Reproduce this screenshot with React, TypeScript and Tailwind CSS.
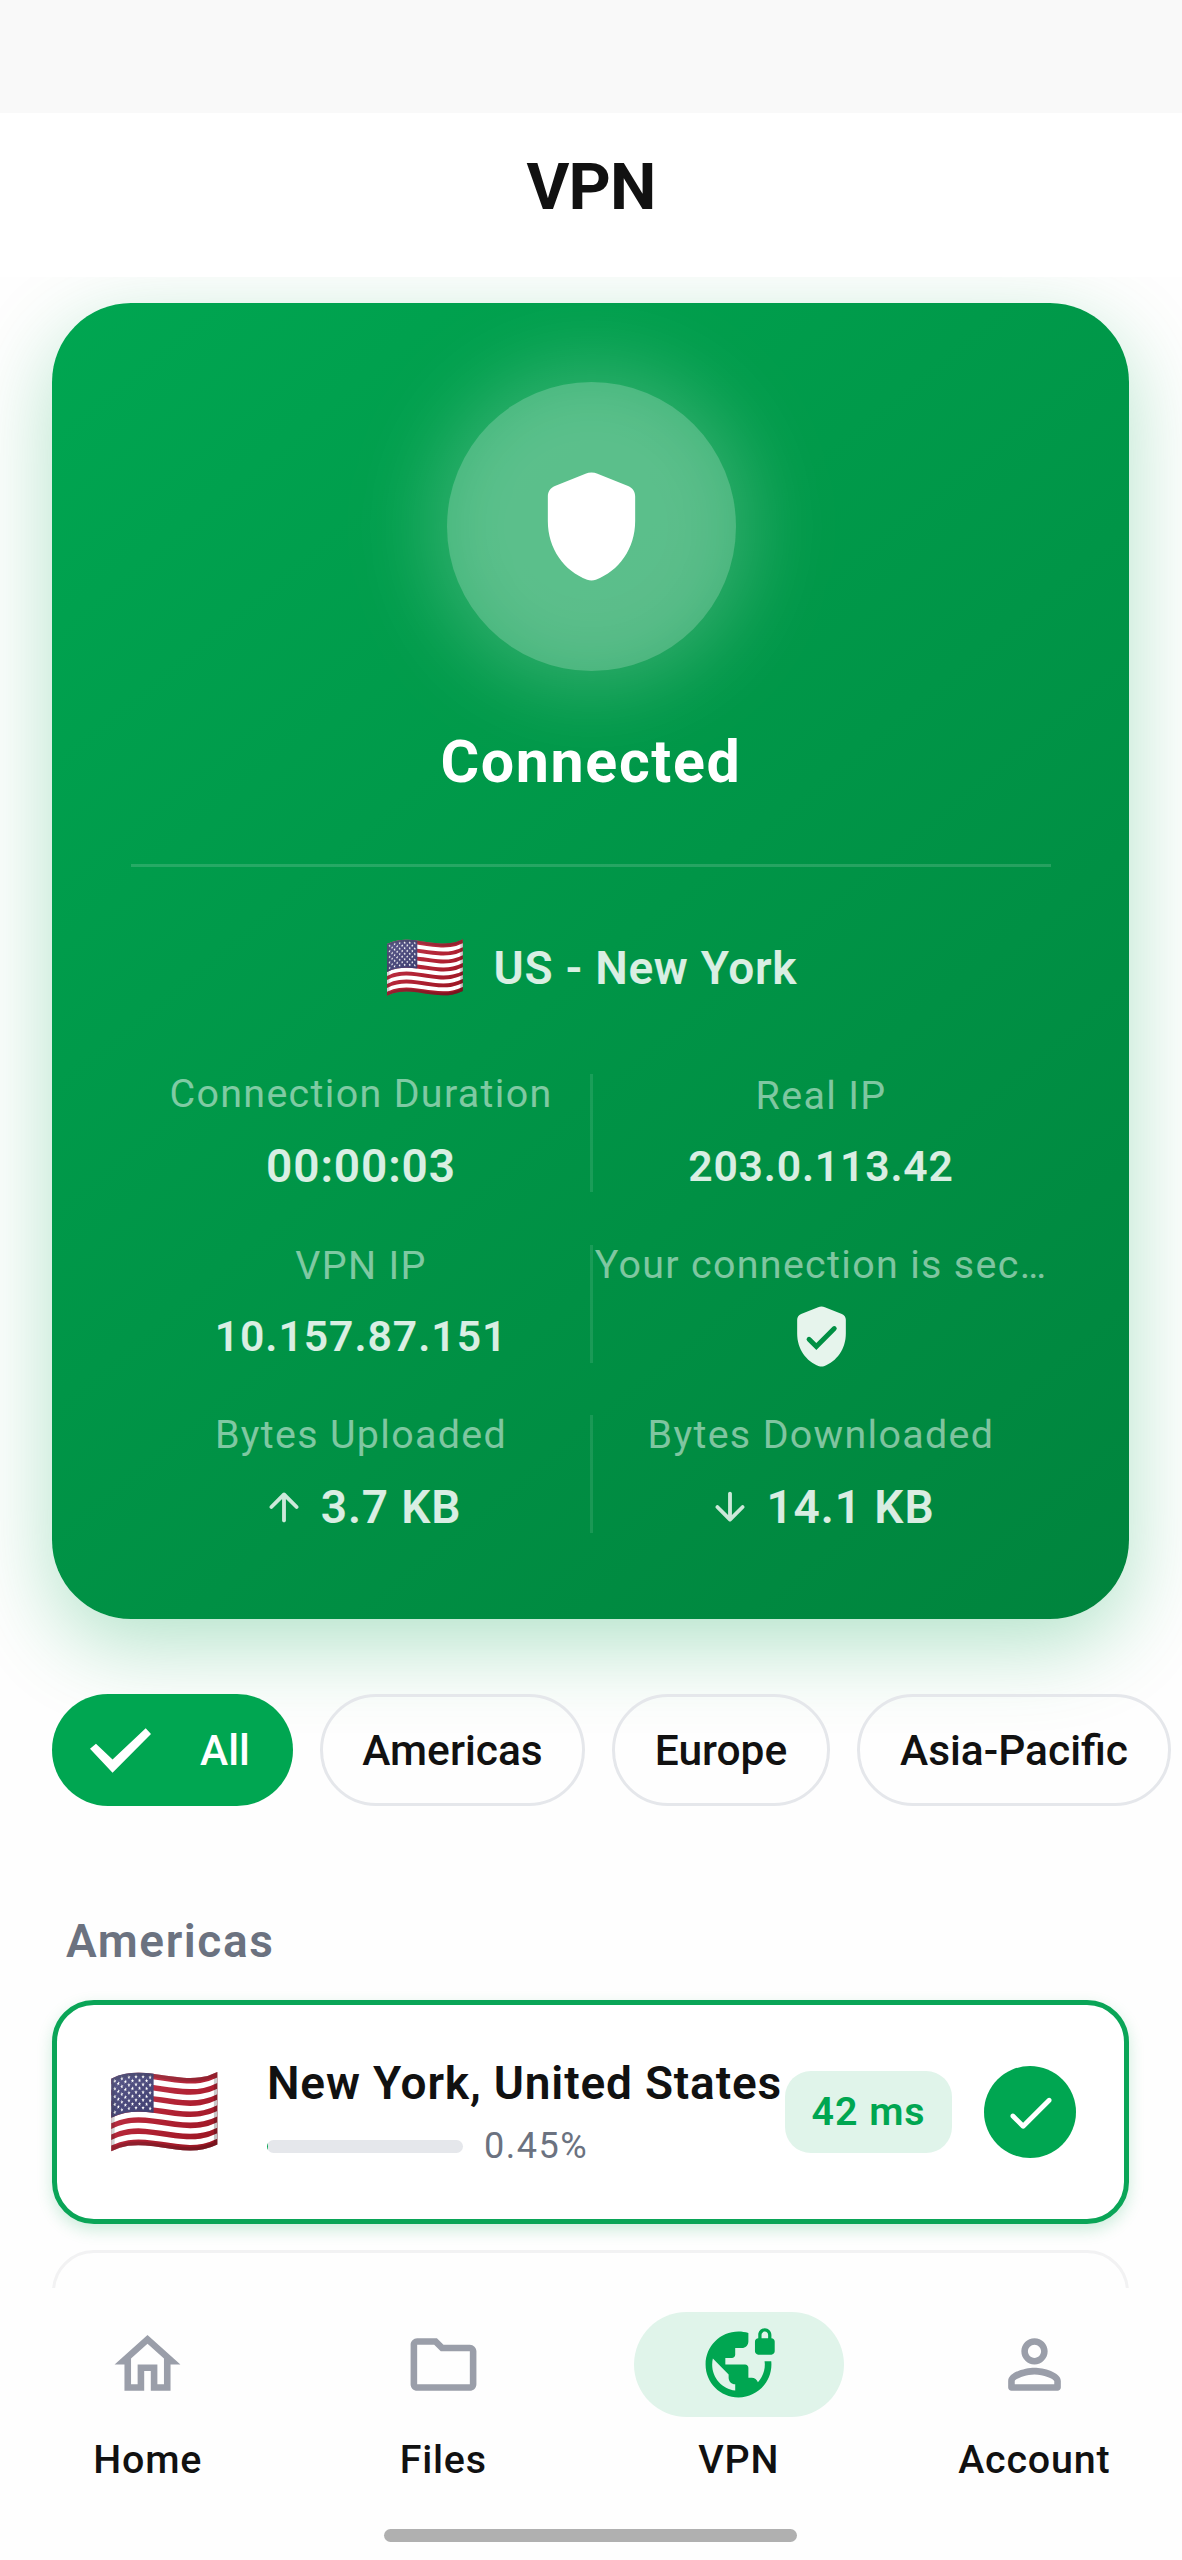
import React from "react";

type IconProps = { d: string; size: string; className?: string };

function Icon({ d, size, className = "" }: IconProps) {
  return (
    <svg viewBox="0 0 24 24" fill="currentColor" className={`shrink-0 ${size} ${className}`}>
      <path d={d} />
    </svg>
  );
}

const SHIELD =
  "M10.9 2.35 5.3 4.6C4.5 4.9 4 5.65 4 6.5V11c0 5.1 3 9.2 7.2 10.75.5.2 1.1.2 1.6 0C17 20.2 20 16.1 20 11V6.5c0-.85-.5-1.6-1.3-1.9L13.1 2.35c-.7-.3-1.5-.3-2.2 0z";
const ARROW_UP =
  "M13 19V7.83l4.88 4.88c.39.39 1.03.39 1.42 0 .39-.39.39-1.02 0-1.41l-6.59-6.59c-.39-.39-1.02-.39-1.41 0l-6.6 6.58c-.39.39-.39 1.02 0 1.41.39.39 1.02.39 1.41 0L11 7.83V19c0 .55.45 1 1 1s1-.45 1-1z";
const ARROW_DOWN =
  "M11 5v11.17l-4.88-4.88c-.39-.39-1.03-.39-1.42 0-.39.39-.39 1.02 0 1.41l6.59 6.59c.39.39 1.02.39 1.41 0l6.59-6.59c.39-.39.39-1.02 0-1.41-.39-.39-1.02-.39-1.41 0L13 16.17V5c0-.55-.45-1-1-1s-1 .45-1 1z";
const CHECK_ROUND =
  "M9 16.17 5.53 12.7c-.39-.39-1.02-.39-1.41 0-.39.39-.39 1.02 0 1.41l4.18 4.18c.39.39 1.02.39 1.41 0L20.29 7.71c.39-.39.39-1.02 0-1.41-.39-.39-1.02-.39-1.41 0L9 16.17z";
const HOME = "M12 5.69l5 4.5V18h-2v-6H9v6H7v-7.81l5-4.5M12 3L2 12h3v8h6v-6h2v6h6v-8h3L12 3z";
const FOLDER =
  "M9.17 6l2 2H20v10H4V6h5.17M10 4H4c-1.1 0-1.99.9-1.99 2L2 18c0 1.1.9 2 2 2h16c1.1 0 2-.9 2-2V8c0-1.1-.9-2-2-2h-8l-2-2z";
const PERSON =
  "M12 6c1.1 0 2 .9 2 2s-.9 2-2 2-2-.9-2-2 .9-2 2-2m0 9c2.7 0 5.8 1.29 6 2v1H6v-.99c.2-.72 3.3-2.01 6-2.01m0-11C9.79 4 8 5.79 8 8s1.79 4 4 4 4-1.79 4-4-1.79-4-4-4zm0 9c-2.67 0-8 1.34-8 4v2c0 .55.45 1 1 1h14c.55 0 1-.45 1-1v-2c0-2.66-5.33-4-8-4z";

function SecureShield() {
  return (
    <svg viewBox="0 0 24 24" className="size-[73px] shrink-0" fill="none">
      <path d={SHIELD} fill="#e6f4ec" />
      <path d="M7.9 12.9l2.4 2.4 5.9-5.9" stroke="#008f43" strokeWidth="1.6" strokeLinecap="round" />
    </svg>
  );
}

function GlobeLock() {
  return (
    <svg viewBox="0 0 24 24" fill="currentColor" className="size-[79px] text-[#00a651]">
      <path
        transform="translate(1 -1)"
        d="M21 5V4c0-1.1-.9-2-2-2s-2 .9-2 2v1c-.55 0-1 .45-1 1v3c0 .55.45 1 1 1h4c.55 0 1-.45 1-1V6c0-.55-.45-1-1-1zm-1 0h-2V4c0-.55.45-1 1-1s1 .45 1 1v1zM18.92 12c.04.33.08.66.08 1 0 2.08-.8 3.97-2.1 5.39-.26-.81-1-1.39-1.9-1.39h-1v-3c0-.55-.45-1-1-1H7v-2h2c.55 0 1-.45 1-1V8h2c1.1 0 2-.9 2-2V3.46c-.95-.3-1.95-.46-3-.46C5.48 3 1 7.48 1 13s4.48 10 10 10 10-4.48 10-10c0-.34-.02-.67-.05-1h-2.03zM10 20.93c-3.95-.49-7-3.85-7-7.93 0-.62.08-1.21.21-1.79L8 16v1c0 1.1.9 2 2 2v1.93z"
      />
    </svg>
  );
}

function Stat({ label, labelClass = "", children }: { label: string; labelClass?: string; children: React.ReactNode }) {
  return (
    <div className="flex min-w-0 flex-1 flex-col items-center">
      <div className={`flex h-10 items-center whitespace-nowrap text-[39.4px] leading-none tracking-[1.33px] text-white/50 ${labelClass}`}>
        {label}
      </div>
      <div className="mt-[26px] flex h-[52px] items-center justify-center whitespace-nowrap font-semibold leading-none text-white/85">
        {children}
      </div>
    </div>
  );
}

function StatRow({ children }: { children: [React.ReactNode, React.ReactNode] }) {
  return (
    <div className="flex h-[118px]">
      {children[0]}
      <div className="-mx-[1.5px] w-[3px] bg-white/10" />
      {children[1]}
    </div>
  );
}

function ConnectionCard() {
  return (
    <section className="ml-[52px] mt-[26px] flex h-[1315.5px] w-[1077px] flex-col items-center rounded-[79px] bg-[linear-gradient(140.7deg,#00a651,#00843d)] pl-[79px] pr-[78px] pt-[79px] shadow-[0_26px_84px_rgba(0,166,81,0.3)]">
      <div className="relative flex size-[289px] items-center justify-center">
        <div className="absolute -inset-[18px] rounded-full bg-white/20 blur-[40px]" />
        <div className="absolute inset-0 rounded-full bg-white/20" />
        <Icon d={SHIELD} size="size-[131px]" className="relative text-white" />
      </div>
      <h2 className="mt-[56px] flex h-[70px] items-center text-[59.1px] font-bold leading-none tracking-[1.64px] text-white">
        Connected
      </h2>
      <div className="mt-[67px] h-[3px] w-full bg-white/15" />
      <div className="mt-[61px] flex h-20 items-center gap-[27px]">
        <span className="font-['Noto_Color_Emoji'] text-[65.7px] leading-none">🇺🇸</span>
        <span className="text-[46px] font-semibold leading-none tracking-[0.72px] text-white/85">US - New York</span>
      </div>
      <div className="mt-[66px] flex w-full flex-col gap-[52.5px]">
        <StatRow>
          <Stat label="Connection Duration">
            <span className="text-[46px] tracking-[0.89px]">00:00:03</span>
          </Stat>
          <Stat label="Real IP" labelClass="pt-[3px]">
            <span className="text-[42.7px] tracking-[0.8px]">203.0.113.42</span>
          </Stat>
        </StatRow>
        <StatRow>
          <Stat label="VPN IP" labelClass="pt-[3px]">
            <span className="text-[42.7px] tracking-[0.95px]">10.157.87.151</span>
          </Stat>
          <Stat label="Your connection is sec…">
            <SecureShield />
          </Stat>
        </StatRow>
        <StatRow>
          <Stat label="Bytes Uploaded">
            <Icon d={ARROW_UP} size="size-[46px]" className="mr-[14px] text-white/80" />
            <span className="text-[46px] tracking-[0.84px]">3.7 KB</span>
          </Stat>
          <Stat label="Bytes Downloaded">
            <Icon d={ARROW_DOWN} size="size-[46px]" className="mr-[13px] text-white/80" />
            <span className="text-[46px] tracking-[0.92px]">14.1 KB</span>
          </Stat>
        </StatRow>
      </div>
    </section>
  );
}

function Chip({ label, width }: { label: string; width: string }) {
  return (
    <button
      className={`flex h-[112px] shrink-0 items-center justify-center rounded-full border-[3px] border-[#e5e7eb] pt-[2px] text-[42.5px] font-medium leading-none text-[#111] ${width}`}
    >
      {label}
    </button>
  );
}

function ServerCard() {
  return (
    <div className="ml-[52px] mt-[32px] flex h-[224px] w-[1077px] items-center rounded-[42px] border-[5px] border-[#0aa557] bg-white shadow-[0_6px_16px_rgba(0,166,81,0.2)]">
      <span className="ml-[50px] w-[113px] font-['Noto_Color_Emoji'] text-[92px] leading-none">🇺🇸</span>
      <div className="ml-[47px] flex w-[518px] flex-col">
        <span className="whitespace-nowrap text-[46px] font-semibold leading-[54px] tracking-[0.82px] text-[#111]">
          New York, United States
        </span>
        <div className="mt-[14px] flex h-[44px] items-center">
          <div className="h-[13px] w-[196px] overflow-hidden rounded-full bg-[#e5e7eb]">
            <div className="h-full w-[1px] bg-[#00a651]" />
          </div>
          <span className="ml-[21px] text-[36.1px] leading-none tracking-[1.5px] text-[#6b7280]">0.45%</span>
        </div>
      </div>
      <div className="flex h-[82px] w-[167px] items-center justify-center rounded-[26px] bg-[#e0f4ea] text-[39.4px] font-semibold leading-none tracking-[0.95px] text-[#00a651]">
        42 ms
      </div>
      <div className="ml-[32px] flex size-[92px] items-center justify-center rounded-full bg-[#00a651] text-white">
        <Icon d={CHECK_ROUND} size="size-[59px]" />
      </div>
    </div>
  );
}

function NavItem({ label, active, children }: { label: string; active?: boolean; children: React.ReactNode }) {
  return (
    <div className="flex flex-1 flex-col items-center">
      <div className={`flex h-[105px] w-[210px] items-center justify-center rounded-full text-[#9a9ea9] ${active ? "bg-[#e0f4ea]" : ""}`}>
        {children}
      </div>
      <span className="mt-[20px] text-[39.4px] font-medium leading-[46px] tracking-[0.8px] text-[#111]">{label}</span>
    </div>
  );
}

export default function App() {
  return (
    <div className="flex h-[2560px] w-[1182px] flex-col overflow-hidden bg-[#fefefe] font-[Roboto,sans-serif]">
      <div className="h-[113px] shrink-0 bg-[#f9f9f9]" />
      <header className="flex h-[164px] shrink-0 items-center justify-center bg-white pb-[17px] text-[65.7px] font-bold leading-none tracking-[-0.82px] text-[#111]">
        VPN
      </header>
      <main className="h-[2010.5px] min-h-0 shrink-0 overflow-hidden">
        <ConnectionCard />
        <div className="ml-[52px] mt-[75.5px] flex gap-[27px]">
          <button className="flex h-[112px] w-[241px] shrink-0 items-center rounded-full bg-[#00a651] pl-[38px] text-[42.5px] font-medium leading-none text-white">
            <svg viewBox="122 128 184 134" fill="currentColor" className="h-[45px] w-[61px]">
              <path d="M122 190l18-15 50 47 100-94 16 17-116 117z" />
            </svg>
            <span className="ml-[49px] pt-[2px]">All</span>
          </button>
          <Chip label="Americas" width="w-[265px]" />
          <Chip label="Europe" width="w-[218px]" />
          <Chip label="Asia-Pacific" width="w-[314px]" />
        </div>
        <h3 className="ml-[66px] mt-[108px] text-[46px] font-semibold leading-[54px] tracking-[1.6px] text-[#6b7280]">
          Americas
        </h3>
        <ServerCard />
        <div className="ml-[52px] mt-[26px] h-[224px] w-[1077px] rounded-[42px] border-[3px] border-[#f2f2f3]" />
      </main>
      <nav className="flex h-[272.5px] shrink-0 flex-col bg-[#fefefe]">
        <div className="flex pt-[24.5px]">
          <NavItem label="Home">
            <Icon d={HOME} size="size-[79px]" />
          </NavItem>
          <NavItem label="Files">
            <Icon d={FOLDER} size="size-[79px]" />
          </NavItem>
          <NavItem label="VPN" active>
            <GlobeLock />
          </NavItem>
          <NavItem label="Account">
            <Icon d={PERSON} size="size-[79px]" />
          </NavItem>
        </div>
        <div className="ml-[384px] mt-[46px] h-[13px] w-[413px] rounded-full bg-[#b0b0b0]" />
      </nav>
    </div>
  );
}
